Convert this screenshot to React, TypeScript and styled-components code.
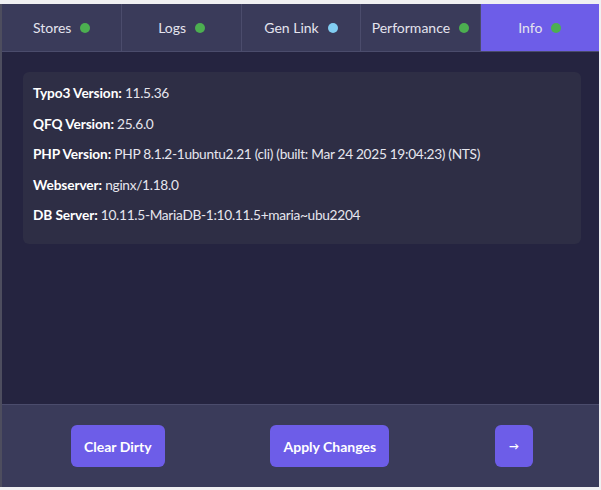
import styled, { createGlobalStyle } from "styled-components";

const GlobalStyle = createGlobalStyle`
    html, body {
        margin: 0;
        padding: 0;
        background: #f0f0f2;
    }
    body {
        font-family: Lato, "Noto Sans", sans-serif;
    }
`;

type Status = "ok" | "info";

const tabs: { label: string; status: Status }[] = [
    { label: "Stores", status: "ok" },
    { label: "Logs", status: "ok" },
    { label: "Gen Link", status: "info" },
    { label: "Performance", status: "ok" },
    { label: "Info", status: "ok" },
];

const infoRows = [
    { label: "Typo3 Version:", value: "11.5.36" },
    { label: "QFQ Version:", value: "25.6.0" },
    {
        label: "PHP Version:",
        value: "PHP 8.1.2-1ubuntu2.21 (cli) (built: Mar 24 2025 19:04:23) (NTS)",
    },
    { label: "Webserver:", value: "nginx/1.18.0" },
    { label: "DB Server:", value: "10.11.5-MariaDB-1:10.11.5+maria~ubu2204" },
];

export default function App() {
    const active = "Info";
    return (
        <>
            <GlobalStyle />
            <Panel>
                <TabBar>
                    {tabs.map((tab) => (
                        <Tab key={tab.label} $active={tab.label === active}>
                            {tab.label}
                            <Dot $status={tab.status} />
                        </Tab>
                    ))}
                </TabBar>
                <Content>
                    <Card>
                        {infoRows.map((row) => (
                            <Row key={row.label}>
                                <Label>{row.label}</Label> {row.value}
                            </Row>
                        ))}
                    </Card>
                </Content>
                <Footer>
                    <Button>Clear Dirty</Button>
                    <Button>Apply Changes</Button>
                    <Button $small>→</Button>
                </Footer>
            </Panel>
        </>
    );
}

const Panel = styled.div`
    display: flex;
    flex-direction: column;
    width: 597px;
    height: 483px;
    margin-top: 4px;
    border-left: 2px solid #4d4d5e;
    background-color: #252440;
    overflow: hidden;
`;

const TabBar = styled.div`
    display: grid;
    grid-template-columns: repeat(5, 1fr);
    height: 47px;
    background-color: #3a3b5a;
    border-bottom: 1px solid #4b4c6c;
`;

const Tab = styled.div<{ $active?: boolean }>`
    display: flex;
    align-items: center;
    justify-content: center;
    gap: 9px;
    font-size: 14px;
    color: #e4e4ee;
    background-color: ${(p) => (p.$active ? "#6d5de8" : "transparent")};
    border-left: 1px solid #4b4c6c;

    &:first-child {
        border-left: none;
    }
`;

const Dot = styled.span<{ $status: Status }>`
    width: 10px;
    height: 10px;
    border-radius: 50%;
    background-color: ${(p) => (p.$status === "ok" ? "#4caf50" : "#81cdf2")};
`;

const Content = styled.div`
    flex: 1;
    padding: 20px 18px 0 21px;
`;

const Card = styled.div`
    display: flex;
    flex-direction: column;
    gap: 10px;
    padding: 11px 10px 18px;
    background-color: #2e2e45;
    border-radius: 6px;
`;

const Row = styled.div`
    font-size: 13.7px;
    line-height: 20.5px;
    color: #e6e6ee;
    letter-spacing: -0.3px;
`;

const Label = styled.strong`
    font-weight: 700;
    color: #ffffff;
    letter-spacing: -0.1px;
`;

const Footer = styled.div`
    display: flex;
    align-items: center;
    justify-content: space-between;
    height: 82px;
    padding: 0 66px 0 69px;
    background-color: #3a3b5a;
    border-top: 1px solid #4b4c6c;
`;

const Button = styled.button<{ $small?: boolean }>`
    height: 42px;
    padding: ${(p) => (p.$small ? "0 14px" : "0 13px")};
    border: none;
    border-radius: 6px;
    background-color: #6d5de8;
    color: #ffffff;
    font-family: Lato, "Noto Sans", sans-serif;
    font-size: ${(p) => (p.$small ? "10px" : "14px")};
    font-weight: 700;
    cursor: pointer;
`;
